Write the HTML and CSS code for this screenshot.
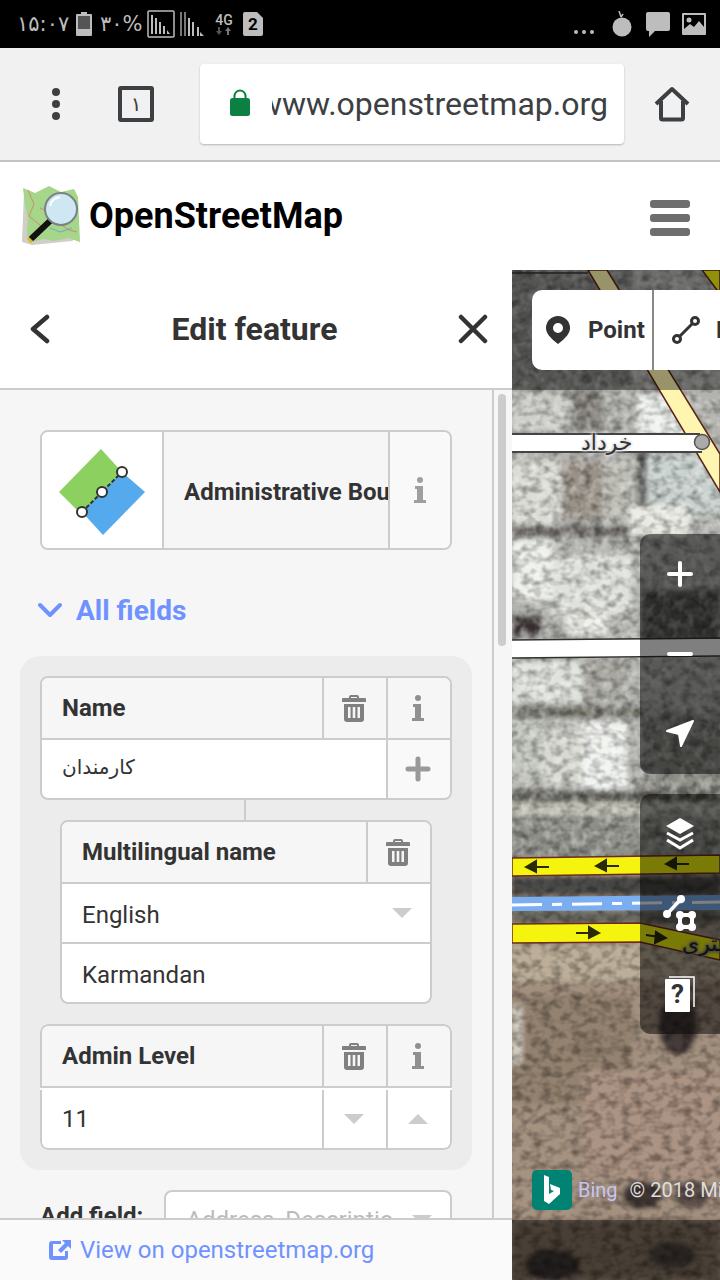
FILE: index.html
```html
<!DOCTYPE html>
<html lang="en">

<head>
    <meta charset="UTF-8">
    <meta name="viewport" content="width=device-width, initial-scale=1.0">
    <title>OpenStreetMap</title>
    <link rel="stylesheet" href="styles.css">
</head>

<body>
    <!-- Phone status bar -->
    <div class="status-bar">
        <div class="status-left">
            <span class="status-time">۱۵:۰۷</span>
            <svg class="st-battery" width="16" height="24" viewBox="0 0 16 24"><path fill="#bdbdbd" d="M5 0h6v2h4a1 1 0 0 1 1 1v20a1 1 0 0 1-1 1H1a1 1 0 0 1-1-1V3a1 1 0 0 1 1-1h4z"/><rect x="2" y="4" width="12" height="13" fill="#555"/></svg>
            <span class="status-pct">۳۰%</span>
            <svg width="28" height="28" viewBox="0 0 28 28"><rect x="1" y="1" width="26" height="26" rx="1" fill="none" stroke="#bdbdbd" stroke-width="1.5"/><path fill="#bdbdbd" d="M4 5h2v19H4zM8 8h2v16H8zM12 12h2v12h-2zM16 16h2v8h-2zM20 20l3 4h-3z"/></svg>
            <svg width="24" height="24" viewBox="0 0 24 24"><path fill="#777" d="M0 0h2v24H0zM4 0h2v24H4z"/><path fill="#bdbdbd" d="M8 6h2v18H8zM12 10h2v14h-2zM17 15h2v9h-2zM20 20l4 4h-4z"/></svg>
            <span class="status-net">4G<svg class="net-arrows" width="16" height="8" viewBox="0 0 16 8"><path fill="#555" d="M2 0h2v4h2L3 8 0 4h2z"/><path fill="#777" d="M11 8h2V4h2l-3-4-3 4h2z"/></svg></span>
            <span class="status-sim">2</span>
        </div>
        <div class="status-right">
            <span class="status-dots"><i></i><i></i><i></i></span>
            <svg class="st-bomb" width="20" height="26" viewBox="0 0 20 26"><circle cx="10" cy="16" r="9.5" fill="#bdbdbd"/><path d="M9 6 7 0M9 6l2-3" stroke="#bdbdbd" stroke-width="1.5"/></svg>
            <svg width="24" height="25" viewBox="0 0 24 25"><path fill="#bdbdbd" d="M2 0h20a2 2 0 0 1 2 2v15a2 2 0 0 1-2 2H9l-6 6v-6H2a2 2 0 0 1-2-2V2a2 2 0 0 1 2-2z"/></svg>
            <svg width="24" height="22" viewBox="0 0 24 22"><path fill="#bdbdbd" fill-rule="evenodd" d="M1 0h22a1 1 0 0 1 1 1v20a1 1 0 0 1-1 1H1a1 1 0 0 1-1-1V1a1 1 0 0 1 1-1zm1 2v14l6-5 4 3 5-6 5 6V2z"/><circle cx="7" cy="7" r="2.5" fill="#bdbdbd"/></svg>
        </div>
    </div>

    <!-- Browser toolbar -->
    <div class="browser-bar">
        <svg class="bar-menu" width="10" height="34" viewBox="0 0 10 34"><circle cx="5" cy="5" r="4" fill="#3c4043"/><circle cx="5" cy="17" r="4" fill="#3c4043"/><circle cx="5" cy="29" r="4" fill="#3c4043"/></svg>
        <div class="bar-tabs">۱</div>
        <div class="url-box">
            <svg class="url-lock" width="20" height="27" viewBox="0 0 20 27"><path fill="none" stroke="#0b8043" stroke-width="2" d="M4.500 11V7a5.500 5.500 0 0 1 11 0v4"/><rect y="9" width="20" height="18" rx="2.500" fill="#0b8043"/></svg>
            <div class="url-text"><span>www.openstreetmap.org</span></div>
        </div>
        <svg class="bar-home" width="36" height="36" viewBox="0 0 36 36"><path fill="none" stroke="#3c4043" stroke-width="4" stroke-linejoin="round" d="M2 18 18 3l16 15M7 15v17a1.500 1.500 0 0 0 1.500 1.500h19A1.500 1.500 0 0 0 29 32V15"/></svg>
    </div>

    <!-- Site header -->
    <header class="site-header">
        <div class="brand">
            <svg class="brand-logo" width="60" height="60" viewBox="0 0 60 60">
                <path fill="#cfcfc8" d="M4 6l-2 50 10 3 40-4 6-4z"/>
                <path fill="#a5d68a" d="M3 2l12 5 14-7 12 6 13-3 4 8 2 45-12-4-14 3-11-2-14 4-2-10 1-14-3-14z"/>
                <path fill="none" stroke="#c98f6b" stroke-width="1" d="M8 4l6 14-5 12 12 10 16-4 12 8 8 2M20 22l14 6"/>
                <path fill="none" stroke="#6fa8c8" stroke-width="1" d="M30 42l10 4 12-4"/>
                <path stroke="#111" stroke-width="6" stroke-linecap="round" d="M30 35 12 52"/>
                <path stroke="#d8b92c" stroke-width="6" d="M11 53l-2 2"/>
                <circle cx="41" cy="23" r="16" fill="#cfe6f3" stroke="#7b8285" stroke-width="2"/>
                <path fill="none" stroke="#fff" stroke-width="2" d="M30 20a12 12 0 0 1 10-9"/>
            </svg>
            <span class="brand-name">OpenStreetMap</span>
        </div>
        <div class="burger"><i></i><i></i><i></i></div>
    </header>

    <div class="app">
        <!-- Left panel -->
        <aside class="sidebar">
            <div class="side-header">
                <svg width="22" height="30" viewBox="0 0 22 30"><path fill="none" stroke="#333" stroke-width="4.500" stroke-linecap="round" stroke-linejoin="round" d="M18 3 4 15l14 12"/></svg>
                <h2>Edit feature</h2>
                <svg width="30" height="30" viewBox="0 0 30 30"><path fill="none" stroke="#333" stroke-width="4.500" stroke-linecap="round" d="M3 3l24 24M27 3 3 27"/></svg>
            </div>

            <div class="side-body">
                <div class="side-scroll">
                    <div class="preset">
                        <div class="preset-icon">
                            <svg width="90" height="90" viewBox="0 0 90 90">
                                <path fill="#8cd05f" d="M43 4 1 47l23 23 40-43z"/>
                                <path fill="#55aaee" d="M64 27l23 20-42 43-21-23z"/>
                                <path fill="none" stroke="#333" stroke-width="2" stroke-dasharray="4 2" d="M24 67 64 27"/>
                                <circle cx="24" cy="67" r="5" fill="#fff" stroke="#333" stroke-width="2"/>
                                <circle cx="44" cy="47" r="5" fill="#fff" stroke="#333" stroke-width="2"/>
                                <circle cx="64" cy="27" r="5" fill="#fff" stroke="#333" stroke-width="2"/>
                            </svg>
                        </div>
                        <div class="preset-name"><span>Administrative Boundary</span></div>
                        <div class="preset-info">
                            <svg class="icon-info light" width="12" height="26" viewBox="0 0 12 26"><use href="#i-info"/></svg>
                        </div>
                    </div>

                    <div class="all-fields">
                        <svg width="26" height="16" viewBox="0 0 26 16"><path fill="none" stroke="#7092ff" stroke-width="4" stroke-linecap="round" stroke-linejoin="round" d="M3 3l10 10L23 3"/></svg>
                        <span>All fields</span>
                    </div>

                    <div class="field-group">
                        <div class="field">
                            <div class="field-row head">
                                <div class="field-label">Name</div>
                                <div class="cell"><svg width="24" height="27" viewBox="0 0 24 27"><use href="#i-trash"/></svg></div>
                                <div class="cell"><svg width="12" height="26" viewBox="0 0 12 26"><use href="#i-info"/></svg></div>
                            </div>
                            <div class="field-row">
                                <div class="field-value rtl-val">کارمندان</div>
                                <div class="cell tinted"><svg width="26" height="26" viewBox="0 0 26 26"><path fill="none" stroke="#999" stroke-width="5" stroke-linecap="round" d="M13 3v20M3 13h20"/></svg></div>
                            </div>
                        </div>
                        <div class="connector"></div>
                        <div class="field sub">
                            <div class="field-row head">
                                <div class="field-label">Multilingual name</div>
                                <div class="cell"><svg width="24" height="27" viewBox="0 0 24 27"><use href="#i-trash"/></svg></div>
                            </div>
                            <div class="field-row lined">
                                <div class="field-value">English</div>
                                <span class="caret down"></span>
                            </div>
                            <div class="field-row">
                                <div class="field-value">Karmandan</div>
                            </div>
                        </div>
                        <div class="field level">
                            <div class="field-row head">
                                <div class="field-label">Admin Level</div>
                                <div class="cell"><svg width="24" height="27" viewBox="0 0 24 27"><use href="#i-trash"/></svg></div>
                                <div class="cell"><svg width="12" height="26" viewBox="0 0 12 26"><use href="#i-info"/></svg></div>
                            </div>
                            <div class="field-row">
                                <div class="field-value">11</div>
                                <div class="cell white"><span class="caret down"></span></div>
                                <div class="cell white"><span class="caret up"></span></div>
                            </div>
                        </div>
                    </div>

                    <div class="add-field">
                        <span class="add-label">Add field:</span>
                        <div class="add-select">
                            <span>Address, Descriptio</span>
                            <span class="caret down"></span>
                        </div>
                    </div>
                </div>
                <div class="scrollbar"><div class="scroll-thumb"></div></div>
            </div>

            <div class="side-footer">
                <svg width="22" height="20" viewBox="0 0 22 20"><path fill="#7092ff" d="M3 1h9v3H4v12h12v-5h3v6a3 3 0 0 1-3 3H3a3 3 0 0 1-3-3V4a3 3 0 0 1 3-3z"/><path fill="#7092ff" d="M13 0h9v9l-3-3-7 7-3-3 7-7z"/></svg>
                <span>View on openstreetmap.org</span>
            </div>
        </aside>

        <!-- Map -->
        <main class="map">
            <svg class="map-canvas" width="208" height="1010" viewBox="0 0 208 1010">
                <defs>
                    <filter id="soft" x="-5%" y="-5%" width="110%" height="110%"><feGaussianBlur stdDeviation="2.500"/></filter>
                    <filter id="grain" x="0" y="0" width="100%" height="100%">
                        <feTurbulence type="fractalNoise" baseFrequency="0.1 0.13" numOctaves="2" seed="8"/>
                        <feColorMatrix values="0 0 0 0 0  0 0 0 0 0  0 0 0 0 0  2 0 0 0 -0.8"/>
                    </filter>
                    <filter id="glint" x="0" y="0" width="100%" height="100%">
                        <feTurbulence type="fractalNoise" baseFrequency="0.12 0.1" numOctaves="2" seed="21"/>
                        <feColorMatrix values="0 0 0 0 1  0 0 0 0 1  0 0 0 0 1  2 0 0 0 -0.85"/>
                    </filter>
                </defs>
                <g filter="url(#soft)">
                    <rect width="208" height="1010" fill="#a89a8c"/>
                    <!-- built up part -->
                    <rect x="-10" y="-10" width="230" height="600" fill="#b2b3ae"/>
                    <rect x="-10" y="-10" width="130" height="130" fill="#8c8e8a"/>
                    <rect x="0" y="125" width="55" height="35" fill="#cfcfca"/>
                    <rect x="60" y="120" width="30" height="40" fill="#85827c"/>
                    <rect x="125" y="125" width="50" height="40" fill="#eef2ee"/>
                    <rect x="0" y="190" width="50" height="70" fill="#dcdcd6"/>
                    <rect x="50" y="190" width="40" height="60" fill="#9a9288"/>
                    <rect x="90" y="190" width="35" height="70" fill="#bdbdb5"/>
                    <rect x="130" y="185" width="80" height="60" fill="#c9d2ce"/>
                    <rect x="125" y="170" width="10" height="100" fill="#5a5a58"/>
                    <rect x="0" y="255" width="120" height="12" fill="#6d6b66"/>
                    <rect x="0" y="270" width="40" height="60" fill="#eef0ea"/>
                    <rect x="40" y="285" width="80" height="60" fill="#dfe2dc"/>
                    <rect x="118" y="235" width="60" height="30" fill="#eaeae4"/>
                    <rect x="0" y="345" width="30" height="22" fill="#463c3e"/>
                    <rect x="55" y="345" width="40" height="20" fill="#efefe9"/>
                    <rect x="130" y="320" width="78" height="50" fill="#615f5c"/>
                    <rect x="0" y="392" width="70" height="40" fill="#dfe3dc"/>
                    <rect x="70" y="388" width="40" height="40" fill="#a9a8a0"/>
                    <rect x="0" y="436" width="130" height="12" fill="#7b7b72"/>
                    <rect x="0" y="452" width="30" height="60" fill="#c4c7be"/>
                    <rect x="30" y="460" width="40" height="55" fill="#d8dad2"/>
                    <rect x="70" y="452" width="45" height="70" fill="#f1f3ef"/>
                    <rect x="130" y="440" width="80" height="85" fill="#8d8f87"/>
                    <rect x="0" y="520" width="208" height="12" fill="#5d5b55"/>
                    <rect x="0" y="532" width="208" height="14" fill="#bfbfb4"/>
                    <rect x="0" y="546" width="208" height="46" fill="#8e8f88"/>
                    <rect x="0" y="606" width="208" height="20" fill="#4c4c48"/>
                    <rect x="0" y="640" width="208" height="14" fill="#6a6a62"/>
                    <!-- bare ground -->
                    <rect x="-10" y="672" width="230" height="348" fill="#a3907f"/>
                    <rect x="-10" y="675" width="230" height="36" fill="#bcae98"/>
                    <rect x="0" y="725" width="120" height="110" fill="#94826f"/>
                    <rect x="70" y="800" width="140" height="110" fill="#ac9484"/>
                    <rect x="0" y="850" width="60" height="100" fill="#a59280"/>
                    <rect x="0" y="735" width="10" height="60" fill="#d5cfc2"/>
                    <rect x="0" y="950" width="208" height="60" fill="#7a6a5a"/>
                    <ellipse cx="166" cy="755" rx="20" ry="30" fill="#453a38"/>
                    <ellipse cx="130" cy="925" rx="20" ry="14" fill="#3f3632"/>
                    <ellipse cx="180" cy="925" rx="18" ry="14" fill="#5d4f48"/>
                    <ellipse cx="160" cy="985" rx="24" ry="14" fill="#4a3f3a"/>
                    <ellipse cx="40" cy="995" rx="28" ry="16" fill="#3a3230"/>
                </g>
                <rect width="208" height="1010" filter="url(#grain)" opacity=".4"/>
                <rect width="208" height="590" filter="url(#glint)" opacity=".45"/>

                <!-- roads -->
                <path fill="#fdf5b0" stroke="#5a2418" stroke-width="1.500" d="M76 0 208 222V184L95 0z"/>
                <path fill="#f3ee10" stroke="#5a2418" stroke-width="1.500" d="M190 0l18 24V0z"/>
                <path fill="none" stroke="#333" stroke-width="1.500" d="M0 3H76"/>
                <path fill="#fff" d="M0 164H190V181H0z"/>
                <path fill="none" stroke="#444" stroke-width="2" d="M0 164H188M0 182H190"/>
                <circle cx="190" cy="172" r="7.500" fill="#aaa" stroke="#555" stroke-width="1.500"/>

                <path fill="#fff" d="M0 370 208 369V387L0 388z"/>
                <path fill="none" stroke="#333" stroke-width="1.500" d="M0 370 208 368M0 388 208 386"/>

                <path fill="#f4f40e" stroke="#6e2a20" stroke-width="1.500" d="M0 588 208 585V603L0 606z"/>
                <g class="road-arrows">
                    <path d="M14 597H37M14 597l10-6v11z"/>
                    <path d="M84 596H107M84 596l10-6v11z"/>
                    <path d="M154 594H177M154 594l10-6v11z"/>
                </g>
                <path fill="#7aaef0" d="M0 627 208 625V640L0 641z"/>
                <path fill="none" stroke="#fff" stroke-width="3" stroke-dasharray="30 10 10 10" d="M0 635 208 632"/>
                <path fill="#f4f40e" stroke="#6e2a20" stroke-width="1.500" d="M0 654 128 653 208 670V690L128 672 0 673z"/>
                <g class="road-arrows">
                    <path d="M64 663H87M87 663l-10-6v11z"/>
                    <path d="M134 665 154 668M154 668l-10-6-1 11z"/>
                </g>
            </svg>

            <span class="street-label top">خرداد</span>
            <span class="street-label low">ستری</span>

            <div class="map-dim top"></div>
            <div class="map-dim bottom"></div>

            <div class="add-tools">
                <div class="tool">
                    <svg width="24" height="28" viewBox="0 0 24 28"><path fill="#333" fill-rule="evenodd" d="M12 0a12 12 0 0 1 12 12c0 5-4 10-12 16C4 22 0 17 0 12A12 12 0 0 1 12 0zm0 7a5 5 0 1 0 0 10 5 5 0 0 0 0-10z"/></svg>
                    <span>Point</span>
                </div>
                <div class="tool">
                    <svg width="28" height="28" viewBox="0 0 28 28"><path fill="none" stroke="#333" stroke-width="3" d="M7 21 21 7"/><circle cx="5" cy="23" r="3.500" fill="#fff" stroke="#333" stroke-width="3"/><circle cx="23" cy="5" r="3.500" fill="#fff" stroke="#333" stroke-width="3"/></svg>
                    <span>Line</span>
                </div>
            </div>

            <div class="map-ctrl zoom-ctrl">
                <div class="ctrl-btn"><svg width="26" height="26" viewBox="0 0 26 26"><path stroke="#fff" stroke-width="4" stroke-linecap="round" d="M13 2v22M2 13h22"/></svg></div>
                <div class="ctrl-btn"><svg width="26" height="6" viewBox="0 0 26 6"><path stroke="#fff" stroke-width="4" stroke-linecap="round" d="M2 3h22"/></svg></div>
                <div class="ctrl-btn"><svg width="28" height="28" viewBox="0 0 28 28"><path fill="#fff" stroke="#fff" stroke-width="2" stroke-linejoin="round" d="M27 1 15 26l-2-12L1 11z"/></svg></div>
            </div>
            <div class="map-ctrl tools-ctrl">
                <div class="ctrl-btn"><svg width="30" height="32" viewBox="0 0 30 32"><path fill="#fff" d="M15 0l14 8-14 8L1 8z"/><path fill="none" stroke="#fff" stroke-width="3" d="M2 15l13 7 13-7M2 22l13 8 13-8"/></svg></div>
                <div class="ctrl-btn"><svg width="36" height="38" viewBox="0 0 36 38"><path stroke="#fff" stroke-width="3.500" d="M6 18 19 4"/><circle cx="19" cy="4" r="4" fill="#fff"/><circle cx="5" cy="19" r="4" fill="#fff"/><path fill="none" stroke="#fff" stroke-width="4" d="M18 20h12v12H18z"/><circle cx="18" cy="20" r="4" fill="#fff"/><circle cx="30" cy="20" r="4" fill="#fff"/><circle cx="18" cy="32" r="4" fill="#fff"/><circle cx="30" cy="32" r="4" fill="#fff"/></svg></div>
                <div class="ctrl-btn"><svg width="30" height="36" viewBox="0 0 30 36"><path fill="none" stroke="#fff" stroke-width="1.500" d="M4 1h25v30"/><rect x="0" y="3" width="25" height="33" rx="1" fill="#fff"/><text class="help-mark" x="12.500" y="27">?</text></svg></div>
            </div>

            <div class="attribution">
                <span class="bing-logo"><svg width="16" height="30" viewBox="0 0 16 30"><path fill="#fff" d="M0 0l5 2v17l5-3-3-1-1-6 10 4v6L5 29l-5-3z"/></svg></span>
                <a class="bing-name">Bing</a>
                <span class="copyright">© 2018 Microsoft</span>
            </div>
        </main>
    </div>

    <!-- shared icons -->
    <svg class="icon-defs" width="0" height="0">
        <symbol id="i-trash" viewBox="0 0 24 27">
            <path fill="#808080" fill-rule="evenodd" d="M9 0h6a2 2 0 0 1 2 2v1h6a1 1 0 0 1 1 1v3H0V4a1 1 0 0 1 1-1h6V2a2 2 0 0 1 2-2zm0 2v1h6V2zM2 9h20v15a3 3 0 0 1-3 3H5a3 3 0 0 1-3-3zm4 3v11h2.500V12zm4.700 0v11h2.600V12zm4.800 0v11H18V12z"/>
        </symbol>
        <symbol id="i-info" viewBox="0 0 12 26">
            <circle cx="6" cy="3" r="3" fill="#909090"/>
            <path fill="#909090" d="M1 9h8v14h3v3H0v-3h3V12H1z"/>
        </symbol>
    </svg>
</body>

</html>
```

FILE: styles.css
```css
/* General Reset */
* {
    margin: 0;
    padding: 0;
    box-sizing: border-box;
    font-family: 'Roboto', 'DejaVu Sans', sans-serif;
}

body {
    width: 720px;
    height: 1280px;
    overflow: hidden;
    display: flex;
    flex-direction: column;
    background: #fff;
    color: #333;
}

/* Status bar */
.status-bar {
    height: 48px;
    background: #000;
    color: #bdbdbd;
    display: flex;
    justify-content: space-between;
    align-items: center;
    padding: 0 14px 0 17px;
}

.status-left,
.status-right {
    display: flex;
    align-items: center;
}

.status-left svg {
    display: block;
}

.status-time {
    font-family: 'DejaVu Sans', sans-serif;
    font-size: 21px;
    width: 59px;
}

.st-battery {
    margin-right: 8px;
}

.status-pct {
    font-family: 'DejaVu Sans', sans-serif;
    font-size: 21px;
    width: 47px;
}

.status-left svg + svg {
    margin-left: 5px;
}

.status-net {
    font-size: 14px;
    font-weight: 500;
    line-height: 14px;
    width: 20px;
    margin-left: 10px;
    margin-right: 9px;
    display: flex;
    flex-direction: column;
    align-items: center;
}

.status-sim {
    width: 20px;
    height: 24px;
    background: #bdbdbd;
    color: #000;
    font-size: 17px;
    font-weight: 700;
    text-align: center;
    line-height: 25px;
    border-radius: 2px;
    clip-path: polygon(0 0, 70% 0, 100% 25%, 100% 100%, 0 100%);
}

.status-right {
    gap: 12px;
}

.st-bomb {
    margin-right: 2px;
}

.status-dots {
    display: flex;
    gap: 4px;
    margin: 16px 6px 0 0;
}

.status-dots i {
    width: 4px;
    height: 4px;
    border-radius: 50%;
    background: #bdbdbd;
}

/* Browser toolbar */
.browser-bar {
    height: 114px;
    background: #f1f1f1;
    border-bottom: 2px solid #c4c4c4;
    display: flex;
    align-items: flex-start;
    position: relative;
    padding-top: 16px;
}

.bar-menu {
    margin: 23px 0 0 51px;
}

.bar-tabs {
    width: 36px;
    height: 36px;
    margin: 22px 0 0 57px;
    border: 4px solid #3c4043;
    border-radius: 3px;
    color: #3c4043;
    font-size: 20px;
    font-family: 'DejaVu Sans', sans-serif;
    display: flex;
    align-items: center;
    justify-content: center;
}

.url-box {
    width: 424px;
    height: 80px;
    margin-left: 46px;
    background: #fff;
    border-radius: 4px;
    box-shadow: 0 1px 2px rgba(0, 0, 0, 0.25);
    display: flex;
    align-items: center;
    padding-left: 30px;
}

.url-lock {
    margin-top: -3px;
}

.url-text {
    width: 336px;
    margin-left: 22px;
    overflow: hidden;
    white-space: nowrap;
    display: flex;
    justify-content: flex-end;
    font-size: 32px;
    color: #3c4043;
}

.bar-home {
    margin: 22px 0 0 30px;
}

/* Site header */
.site-header {
    height: 108px;
    flex-shrink: 0;
    background: #fff;
    display: flex;
    justify-content: space-between;
    align-items: center;
    padding: 0 30px 0 20px;
}

.brand {
    display: flex;
    align-items: center;
    gap: 9px;
}

.brand-name {
    font-size: 36px;
    font-weight: 700;
    color: #000;
}

.burger {
    width: 40px;
    margin-top: 4px;
    display: flex;
    flex-direction: column;
    gap: 6px;
}

.burger i {
    height: 8px;
    border-radius: 3px;
    background: #6e6e6e;
}

/* Main app */
.app {
    flex: 1;
    min-height: 0;
    display: flex;
}

.sidebar {
    width: 512px;
    flex-shrink: 0;
    display: flex;
    flex-direction: column;
    background: #f6f6f6;
}

.side-header {
    height: 120px;
    flex-shrink: 0;
    background: #fff;
    border-bottom: 2px solid #ccc;
    display: flex;
    justify-content: space-between;
    align-items: center;
    padding: 0 24px 0 29px;
}

.side-header h2 {
    font-size: 32px;
    font-weight: 700;
    color: #333;
}

.side-body {
    flex: 1;
    min-height: 0;
    display: flex;
    overflow: hidden;
}

.side-scroll {
    width: 494px;
    flex-shrink: 0;
    border-right: 2px solid #ccc;
    padding: 40px 20px 0;
}

.scrollbar {
    flex: 1;
    padding: 4px 6px 0 4px;
}

.scroll-thumb {
    height: 252px;
    background: #ccc;
    border-radius: 4px;
}

/* Preset button */
.preset {
    margin: 0 20px;
    height: 120px;
    border: 2px solid #ccc;
    border-radius: 8px;
    display: flex;
    overflow: hidden;
}

.preset-icon {
    width: 122px;
    background: #fff;
    border-right: 2px solid #ccc;
    display: flex;
    align-items: center;
    justify-content: center;
    padding-left: 2px;
}

.preset-name {
    width: 226px;
    border-right: 2px solid #ccc;
    padding: 4px 0 0 20px;
    overflow: hidden;
    white-space: nowrap;
    display: flex;
    align-items: center;
    font-size: 24px;
    font-weight: 700;
}

.preset-info {
    flex: 1;
    background: #f9f9f9;
    display: flex;
    align-items: center;
    justify-content: center;
}

.icon-info.light {
    opacity: 0.85;
}

.all-fields {
    height: 106px;
    display: flex;
    align-items: center;
    gap: 13px;
    padding: 14px 0 0 17px;
    color: #7092ff;
    font-size: 28px;
    font-weight: 700;
}

/* Fields */
.field-group {
    background: #ececec;
    border-radius: 20px;
    padding: 20px;
    height: 514px;
}

.field {
    border: 2px solid #ccc;
    border-radius: 8px;
    overflow: hidden;
    background: #fff;
}

.field.sub {
    margin: 0 20px;
}

.field.sub .field-value {
    padding-top: 3px;
}

.connector {
    width: 2px;
    height: 20px;
    margin-left: 204px;
    background: #ccc;
}

.field-row {
    height: 60px;
    display: flex;
    align-items: center;
    font-size: 24px;
}

.field-row:last-child {
    height: 58px;
}

.field-row.head {
    height: 62px;
    background: #f6f6f6;
    border-bottom: 2px solid #ccc;
    align-items: stretch;
}

.field-row.lined {
    border-bottom: 2px solid #ccc;
}

/* the level field draws its two rows apart, with a thin gap between */
.field.level {
    margin-top: 20px;
    border: none;
}

.field.level .field-row.head {
    height: 64px;
    border: 2px solid #ccc;
    border-radius: 8px 8px 0 0;
}

.field.level .field-row:last-child {
    height: 60px;
    margin-top: 2px;
    border: 2px solid #ccc;
    border-top: none;
    border-radius: 0 0 8px 8px;
}

.field-label {
    flex: 1;
    font-weight: 700;
    padding-left: 20px;
    display: flex;
    align-items: center;
}

.field.sub .field-label {
    padding-top: 0;
}

.field-value {
    flex: 1;
    padding-left: 20px;
    color: #333;
}

.rtl-val {
    font-family: 'DejaVu Sans', sans-serif;
    font-size: 20px;
    padding-bottom: 4px;
}

.cell {
    width: 64px;
    align-self: stretch;
    border-left: 2px solid #ccc;
    display: flex;
    align-items: center;
    justify-content: center;
    padding-right: 2px;
}

.cell.tinted {
    background: #f9f9f9;
}

.caret {
    width: 0;
    height: 0;
    border-left: 10px solid transparent;
    border-right: 10px solid transparent;
}

.caret.down {
    border-top: 10px solid #ccc;
}

.caret.up {
    border-bottom: 10px solid #ccc;
}

.field-row > .caret {
    margin-right: 18px;
}

/* Add field */
.add-field {
    margin-top: 20px;
    padding-left: 20px;
    display: flex;
    gap: 21px;
}

.add-label {
    font-size: 24px;
    font-weight: 700;
    margin-top: 12px;
    white-space: nowrap;
}

.add-select {
    width: 288px;
    height: 60px;
    background: #fff;
    border: 2px solid #ccc;
    border-radius: 8px;
    display: flex;
    align-items: center;
    justify-content: space-between;
    padding: 0 18px 0 20px;
    font-size: 24px;
    color: #bbb;
    white-space: nowrap;
}

.side-footer {
    height: 62px;
    flex-shrink: 0;
    background: #fafafa;
    border-top: 2px solid #ccc;
    display: flex;
    align-items: center;
    gap: 9px;
    padding-left: 49px;
    font-size: 24px;
    color: #7092ff;
    position: relative;
}

/* Map */
.map {
    flex: 1;
    position: relative;
    overflow: hidden;
    background: #a3907f;
}

.map-canvas {
    position: absolute;
    top: 0;
    left: 0;
}

.road-arrows path {
    fill: #2a2a08;
    stroke: #2a2a08;
    stroke-width: 2;
}

.street-label {
    position: absolute;
    font-family: 'DejaVu Sans', sans-serif;
    font-size: 22px;
    color: #333;
    white-space: nowrap;
    direction: rtl;
    text-shadow: 0 0 3px #ddd, 0 0 3px #ddd, 0 0 3px #ddd, 0 0 5px #ddd;
}

.street-label.top {
    left: 69px;
    top: 160px;
}

.street-label.low {
    left: 170px;
    top: 661px;
    color: #222;
    text-shadow: 0 0 3px #888, 0 0 3px #888, 0 0 3px #888, 0 0 5px #888;
}

.map-dim {
    position: absolute;
    left: 0;
    right: 0;
    background: rgba(0, 0, 0, 0.4);
}

.map-dim.top {
    top: 0;
    height: 120px;
}

.map-dim.bottom {
    bottom: 0;
    height: 60px;
}

.add-tools {
    position: absolute;
    top: 20px;
    left: 20px;
    width: 240px;
    height: 80px;
    background: #fff;
    border-radius: 10px 0 0 10px;
    display: flex;
}

.tool {
    display: flex;
    align-items: center;
    gap: 18px;
    padding-left: 14px;
    font-size: 24px;
    font-weight: 700;
    color: #333;
}

.tool:first-child {
    width: 122px;
    border-right: 2px solid #888;
}

.tool:last-child {
    gap: 16px;
    padding-left: 18px;
}

.map-ctrl {
    position: absolute;
    left: 128px;
    width: 80px;
    height: 240px;
    background: rgba(0, 0, 0, 0.5);
    border-radius: 10px 0 0 10px;
    display: flex;
    flex-direction: column;
}

.zoom-ctrl {
    top: 264px;
}

.tools-ctrl {
    top: 524px;
}

.ctrl-btn {
    height: 80px;
    display: flex;
    align-items: center;
    justify-content: center;
}

.help-mark {
    font-size: 26px;
    font-weight: 700;
    fill: #333;
    text-anchor: middle;
}

.attribution {
    position: absolute;
    left: 20px;
    top: 900px;
    display: flex;
    align-items: center;
    font-size: 20px;
    white-space: nowrap;
    color: #ddd;
}

.bing-logo {
    width: 40px;
    height: 40px;
    background: #008373;
    border-radius: 5px;
    display: flex;
    align-items: center;
    justify-content: center;
    margin-right: 6px;
}

.bing-name {
    color: #c5c5f5;
    margin-right: 12px;
}

.icon-defs {
    position: absolute;
}
```
